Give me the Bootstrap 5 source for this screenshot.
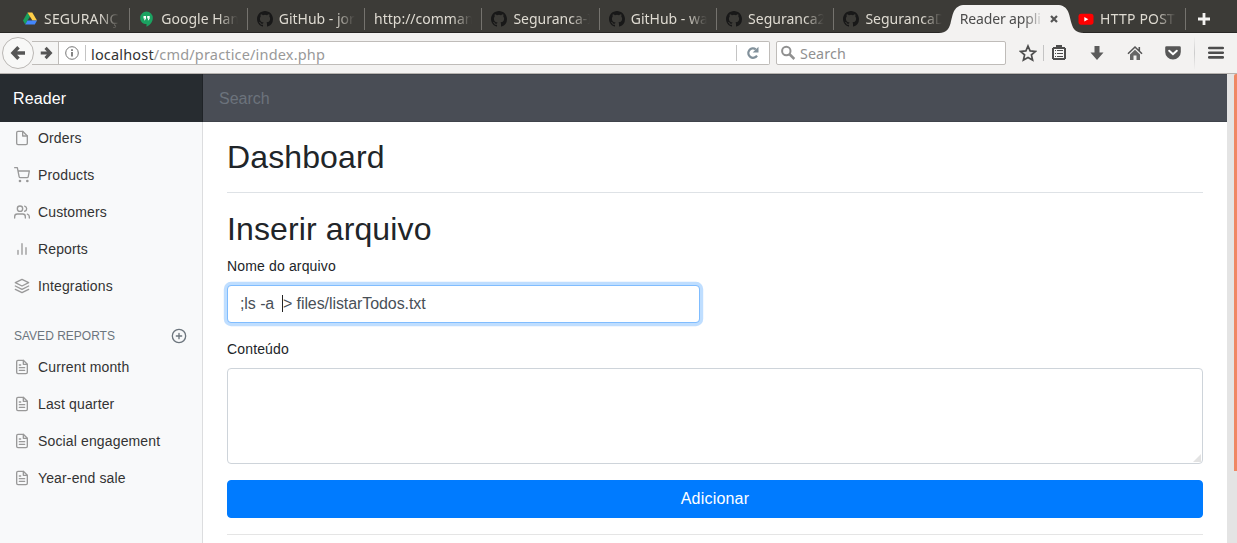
<!DOCTYPE html>
<html lang="pt-BR">
<head>
<meta charset="utf-8">
<meta name="viewport" content="width=device-width, initial-scale=1">
<title>Reader application</title>
<link href="https://cdn.jsdelivr.net/npm/bootstrap@5.3.0/dist/css/bootstrap.min.css" rel="stylesheet">
<style>
  body { font-family: "Liberation Sans", Arial, sans-serif; font-size: 14px; color: #212529; height: 543px; overflow: hidden; background: #fff; }
  .chrome { font-family: "Noto Sans", "Open Sans", sans-serif; }
  /* tab strip */
  .tabstrip { height: 33px; background: #3c3b37; border-bottom: 1px solid #282725; padding-left: 12px; }
  .tab { width: 117.35px; height: 32px; padding: 6px 9px 0 10px; position: relative; color: #dfdbd2; font-size: 14px; flex: none; }
  .tab.sep::after { content: ""; position: absolute; right: -1px; top: 8px; width: 1px; height: 22px; background: #75736e; }
  .tab svg { flex: none; }
  .tab-icon { margin-right: 6px; }
  .tab-text { flex: 1; min-width: 0; white-space: nowrap; overflow: hidden; line-height: 26px; -webkit-mask-image: linear-gradient(90deg, #000 calc(100% - 20px), transparent); mask-image: linear-gradient(90deg, #000 calc(100% - 20px), transparent); }
  .tab-text.caps { letter-spacing: .2px; }
  .tab.current { color: #4c4c4c; z-index: 2; padding-left: 9px; }
  .tab.current .tab-text { letter-spacing: -.15px; }
  .tab.current > * { position: relative; }
  .tab.current .tab-shape { position: absolute; left: -12px; top: 4px; }
  .tab-close { margin: 0 1px 1px 6px; }
  .new-tab { margin: 12px 0 0 12px; }
  /* toolbar */
  .toolbar { height: 41px; background: #f3f2f1; border-bottom: 1px solid #b7b3b0; color: #4d4d4d; }
  .back { width: 32px; height: 32px; border: 1px solid #bab7b4; border-radius: 50%; background: #f8f8f7; margin-left: 2px; z-index: 1; }
  .forward { width: 27px; height: 24px; margin-left: -2px; padding-right: 5px; border: solid #bfbcb9; border-width: 1px 1px 1px 0; background: #f5f5f4; }
  .urlbar { width: 711px; height: 24px; background: #fff; border: solid #bfbcb9; border-width: 1px 1px 1px 0; border-radius: 0 2px 2px 0; font-size: 14.5px; color: #999; }
  .url-text { margin-left: 5px; padding-top: 2px; letter-spacing: .17px; line-height: 20px; }
  .urlbar b { font-weight: 400; color: #333; }
  .vline { width: 1px; height: 16px; background: #c4c4c4; flex: none; }
  .searchbox { width: 230px; height: 24px; background: #fff; border: 1px solid #bfbcb9; border-radius: 2px; margin-left: 6px; font-size: 14.3px; color: #909090; }
  .searchbox span { padding-top: 2px; line-height: 20px; letter-spacing: .1px; }
  .tools svg { display: block; flex: none; margin-left: 22px; }
  /* page */
  .viewport { height: 469px; }
  .topbar { height: 48px; font-size: 16px; box-shadow: inset 0 1px #30343a55, inset 0 -1px #30343a55; background: #494d55; }
  .brand { width: 203px; background: #272c30; color: #fff; padding-left: 13px; line-height: 50px; height: 48px; border-right: 1px solid #1f2327; letter-spacing: .12px; }
  .top-search { padding-left: 16px; line-height: 50px; height: 48px; color: #6c737c; }
  .side { width: 203px; background: #f8f9fa; border-right: 1px solid #dcdddf; overflow: hidden; }
  .side .nav { margin-top: -2px; }
  .side .nav.second { margin-top: 0; padding-top: 1px; }
  .side .nav-link { height: 37px; padding: 0 14px; color: #333; font-size: 14px; font-weight: 500; letter-spacing: .14px; }
  .side .nav-link svg { margin: -2px 8px 0 0; color: #999; flex: none; }
  .side-heading { height: 23px; margin: 20px 15px 0 14px; padding-bottom: 1px; font-size: 12px; color: #6c757d; }
  .ftr { width: 16px; height: 16px; fill: none; stroke: currentColor; stroke-width: 2; stroke-linecap: round; stroke-linejoin: round; }
  .main-col { padding: 16px 24px 0; }
  .main-col h2 { font-size: 32px; font-weight: 500; line-height: 1.2; margin: 0 0 8px; letter-spacing: .12px; }
  .main-col .section-title { padding-top: 1px; margin-bottom: 7px; }
  .title-row { border-bottom: 1px solid #dee2e6; padding-bottom: 8px; margin-bottom: 16px; height: 55.4px; }
  .form-label { display: block; line-height: 21px; margin-bottom: 8px; letter-spacing: .15px; }
  .form-control { border-color: #ced4da; border-radius: 4px; color: #495057; }
  .file-name { width: 473px; height: 38px; font-size: 16px; letter-spacing: -.08px; border-color: #80bdff; box-shadow: 0 0 0 3.2px rgba(0,123,255,.25); }
  .caret { position: absolute; left: 55px; top: 10px; width: 1px; height: 17px; background: #222; }
  .content-area { height: 96px; resize: none; display: block; }
  .grip { position: absolute; right: 2px; bottom: 2px; }
  .add-btn { height: 38px; background: #007bff; border-color: #007bff; border-radius: 4px; font-size: 16px; padding: 5px; letter-spacing: .2px; }
  .rule { border-top: 1px solid #e5e5e5; margin-top: 16px; }
  .scroll-track { width: 10px; background: #e4e4e4; flex: none; }
  .scroll-thumb { width: 3px; height: 397px; background: #f08763; border-radius: 2px 0 0 0; }
</style>
</head>
<body>
<svg class="d-none">
  <symbol id="octo" viewBox="0 0 16 16"><path fill="#181818" fill-rule="evenodd" d="M8 0C3.58 0 0 3.58 0 8c0 3.54 2.29 6.53 5.47 7.59.4.07.55-.17.55-.38 0-.19-.01-.82-.01-1.49-2.01.37-2.53-.49-2.69-.94-.09-.23-.48-.94-.82-1.13-.28-.15-.68-.52-.01-.53.63-.01 1.08.58 1.23.82.72 1.21 1.87.87 2.33.66.07-.52.28-.87.51-1.07-1.78-.2-3.64-.89-3.64-3.95 0-.87.31-1.59.82-2.15-.08-.2-.36-1.02.08-2.12 0 0 .67-.21 2.2.82a7.6 7.6 0 0 1 4 0c1.53-1.04 2.2-.82 2.2-.82.44 1.1.16 1.92.08 2.12.51.56.82 1.27.82 2.15 0 3.07-1.87 3.75-3.65 3.95.29.25.54.73.54 1.48 0 1.07-.01 1.93-.01 2.2 0 .21.15.46.55.38A8.01 8.01 0 0 0 16 8c0-4.42-3.58-8-8-8z"/></symbol>
  <symbol id="doc" viewBox="0 0 24 24"><path d="M14 2H6a2 2 0 0 0-2 2v16a2 2 0 0 0 2 2h12a2 2 0 0 0 2-2V8z"/><path d="M14 2v6h6M16 13H8M16 17H8M10 9H8"/></symbol>
</svg>

<header class="chrome">
  <div class="tabstrip d-flex">
    <div class="tab sep d-flex align-items-center">
      <svg class="tab-icon" width="16" height="16" viewBox="0 0 16 16"><path fill="#18a05e" d="M5.5 1.5 1 9.4 3.2 13.5 8 5.5z"/><path fill="#ffcf48" d="M5.5 1.5h4.8L15 9.4h-4.6z"/><path fill="#4387fd" d="M5.5 9.4H15l-2.2 4.1H3.2z"/></svg>
      <span class="tab-text caps">SEGURANÇ</span></div>
    <div class="tab sep d-flex align-items-center">
      <svg class="tab-icon" width="16" height="16" viewBox="0 0 16 16"><path fill="#1ba261" d="M7.5.6A6.2 6.2 0 0 0 1.2 6.9c0 3.6 2.7 6.2 6.3 6.2v2.6c3.7-1.8 6.3-5 6.3-8.8A6.2 6.2 0 0 0 7.5.6z"/><path fill="#fff" d="M4.5 5h2.500v2.600L6 9.300H5l.7-1.700H4.500zM8.200 5h2.500v2.600L9.700 9.300h-1l.7-1.700H8.200z"/></svg>
      <span class="tab-text">Google Han</span></div>
    <div class="tab sep d-flex align-items-center"><svg class="tab-icon" width="16" height="16"><use href="#octo"/></svg><span class="tab-text">GitHub - jor</span></div>
    <div class="tab sep d-flex align-items-center"><span class="tab-text">http://comman</span></div>
    <div class="tab sep d-flex align-items-center"><svg class="tab-icon" width="16" height="16"><use href="#octo"/></svg><span class="tab-text">Seguranca-I</span></div>
    <div class="tab sep d-flex align-items-center"><svg class="tab-icon" width="16" height="16"><use href="#octo"/></svg><span class="tab-text">GitHub - wa</span></div>
    <div class="tab sep d-flex align-items-center"><svg class="tab-icon" width="16" height="16"><use href="#octo"/></svg><span class="tab-text">Seguranca2</span></div>
    <div class="tab d-flex align-items-center"><svg class="tab-icon" width="16" height="16"><use href="#octo"/></svg><span class="tab-text">SegurancaD</span></div>
    <div class="tab current d-flex align-items-center">
      <svg class="tab-shape" width="145" height="29" viewBox="0 0 145 29"><path fill="#f3f2f1" d="M0 29c7-.5 9.500-3 11.500-9.500C14 9 15 1 26 1h92c11 0 12 8 14.500 18.500C134.500 26 137 28.500 145 29z"/></svg>
      <span class="tab-text">Reader appli</span>
      <svg class="tab-close" width="8" height="8" viewBox="0 0 8 8"><path d="M1 1l6 6M7 1 1 7" stroke="#555" stroke-width="2.200"/></svg></div>
    <div class="tab sep d-flex align-items-center"><svg class="tab-icon" width="16" height="16" viewBox="0 0 16 16"><rect x=".5" y="2.700" width="15" height="11" rx="2.600" fill="#f00"/><path fill="#fff" d="M6.300 5.900v4.600l4-2.300z"/></svg><span class="tab-text caps">HTTP POST</span></div>
    <svg class="new-tab" width="14" height="14" viewBox="0 0 14 14"><path d="M7 1v12M1 7h12" stroke="#f4f3f1" stroke-width="2.800"/></svg>
  </div>
  <div class="toolbar d-flex align-items-center">
    <div class="back d-flex align-items-center justify-content-center position-relative"><svg width="16" height="16" viewBox="0 0 16 16"><path d="M8.500 2.300 3 8l5.500 5.700M3.500 8H15" fill="none" stroke="#555" stroke-width="3.500"/></svg></div>
    <div class="forward d-flex align-items-center justify-content-end"><svg width="14" height="14" viewBox="0 0 16 16"><path d="M7.500 2.200 13 8l-5.500 5.800M2 8h11" fill="none" stroke="#555" stroke-width="3.500"/></svg></div>
    <div class="urlbar d-flex align-items-center">
      <svg width="14" height="14" viewBox="0 0 14 14" style="margin:0 6px"><circle cx="7" cy="7" r="6.300" fill="none" stroke="#777"/><path d="M7 6v4.500M7 3.200v1.700" stroke="#777" stroke-width="1.800"/></svg>
      <span class="vline"></span><span class="url-text"><b>localhost</b>/cmd/practice/index.php</span>
      <span class="vline ms-auto"></span>
      <svg width="14" height="14" viewBox="0 0 14 14" style="margin:0 9px"><path d="M11 9.600A4.700 4.700 0 1 1 9.800 3.300" fill="none" stroke="#82919b" stroke-width="2.200"/><path fill="#82919b" d="M12.500.8v5.800H6.700z"/></svg>
    </div>
    <div class="searchbox d-flex align-items-center"><svg width="16" height="16" viewBox="0 0 16 16" style="margin:0 4px 0 3px"><circle cx="6.300" cy="6" r="4.200" fill="none" stroke="#909090" stroke-width="2"/><path d="m9.300 9 5 5" stroke="#909090" stroke-width="2.500"/></svg><span>Search</span></div>
    <div class="tools d-flex align-items-center flex-fill">
      <svg width="18" height="18" viewBox="0 0 18 18" style="margin-left:13px"><path d="m9 2 2.100 4.900 5.300.5-4 3.500 1.200 5.200L9 13.400l-4.600 2.700 1.200-5.200-4-3.500 5.300-.5z" fill="none" stroke="#4d4d4d" stroke-width="1.700"/></svg>
      <span class="vline" style="margin-left:6px"></span>
      <svg width="16" height="16" viewBox="0 0 16 16" style="margin-left:7px" shape-rendering="crispEdges"><path d="M5 0h6v2h3v1h1v11h-1v1H2v-1H1V3h1V2h3z" fill="#4d4d4d"/><path d="M3 4h10v9H3z" fill="#f6f6f5"/><path d="M4 5.500h1M4 8.500h1M4 11.500h1M6 5.500h6M6 8.500h6M6 11.500h6" stroke="#4d4d4d"/></svg>
      <svg width="16" height="16" viewBox="0 0 16 16"><path d="M5.500 1h5v6.500h4L8 15 1.500 7.500h4z" fill="#5b5b5b"/></svg>
      <svg width="16" height="16" viewBox="0 0 16 16"><path d="M1 8.800 8 2l7 6.800M12.300 2v4" fill="none" stroke="#555" stroke-width="1.600"/><path d="M3 9.600l5-4.800 5 4.800V15H9.500v-4.500h-3V15H3z" fill="#666"/></svg>
      <svg width="16" height="16" viewBox="0 0 16 16"><path d="M1.500 1.200h13a1.300 1.300 0 0 1 1.300 1.300V7A7.800 7.600 0 0 1 .2 7V2.500a1.300 1.300 0 0 1 1.300-1.300z" fill="#575757"/><path d="m4.200 5.700 3.800 3.500 3.800-3.500" fill="none" stroke="#fff" stroke-width="2" stroke-linecap="round"/></svg>
      <span class="vline" style="margin-left:13px;height:34px;background:linear-gradient(#0000,#ccc,#0000)"></span>
      <svg width="16" height="14" viewBox="0 0 16 14" style="margin-left:13px"><path d="M1.200 2h13.600M1.200 6.700h13.600M1.200 11.400h13.600" stroke="#4d4d4d" stroke-width="2.600" stroke-linecap="round"/></svg>
    </div>
  </div>
</header>

<div class="viewport d-flex">
  <div class="d-flex flex-column flex-fill">
    <nav class="topbar d-flex"><div class="brand">Reader</div><div class="top-search">Search</div></nav>
    <div class="d-flex flex-fill">
      <aside class="side">
        <ul class="nav flex-column">
          <li><a class="nav-link d-flex align-items-center"><svg class="ftr" viewBox="0 0 24 24"><path d="M13 2H6a2 2 0 0 0-2 2v16a2 2 0 0 0 2 2h12a2 2 0 0 0 2-2V9z"/><path d="M13 2v7h7"/></svg>Orders</a></li>
          <li><a class="nav-link d-flex align-items-center"><svg class="ftr" viewBox="0 0 24 24"><circle cx="9" cy="21" r="1"/><circle cx="20" cy="21" r="1"/><path d="M1 1h4l2.680 13.390a2 2 0 0 0 2 1.610h9.720a2 2 0 0 0 2-1.610L23 6H6"/></svg>Products</a></li>
          <li><a class="nav-link d-flex align-items-center"><svg class="ftr" viewBox="0 0 24 24"><path d="M17 21v-2a4 4 0 0 0-4-4H5a4 4 0 0 0-4 4v2"/><circle cx="9" cy="7" r="4"/><path d="M23 21v-2a4 4 0 0 0-3-3.870M16 3.130a4 4 0 0 1 0 7.750"/></svg>Customers</a></li>
          <li><a class="nav-link d-flex align-items-center"><svg class="ftr" viewBox="0 0 24 24"><path d="M18 20V10M12 20V4M6 20v-6"/></svg>Reports</a></li>
          <li><a class="nav-link d-flex align-items-center"><svg class="ftr" viewBox="0 0 24 24"><path d="M12 2 2 7l10 5 10-5zM2 17l10 5 10-5M2 12l10 5 10-5"/></svg>Integrations</a></li>
        </ul>
        <div class="side-heading d-flex align-items-center justify-content-between"><span>SAVED REPORTS</span><svg class="ftr" viewBox="0 0 24 24"><circle cx="12" cy="12" r="10"/><path d="M12 8v8M8 12h8"/></svg></div>
        <ul class="nav second flex-column">
          <li><a class="nav-link d-flex align-items-center"><svg class="ftr"><use href="#doc"/></svg>Current month</a></li>
          <li><a class="nav-link d-flex align-items-center"><svg class="ftr"><use href="#doc"/></svg>Last quarter</a></li>
          <li><a class="nav-link d-flex align-items-center"><svg class="ftr"><use href="#doc"/></svg>Social engagement</a></li>
          <li><a class="nav-link d-flex align-items-center"><svg class="ftr"><use href="#doc"/></svg>Year-end sale</a></li>
        </ul>
      </aside>
      <main class="main-col flex-fill">
        <div class="title-row"><h2>Dashboard</h2></div>
        <h2 class="section-title">Inserir arquivo</h2>
        <label class="form-label" for="fn">Nome do arquivo</label>
        <div class="position-relative mb-3"><input id="fn" class="form-control file-name" value=";ls -a  &gt; files/listarTodos.txt"><span class="caret"></span></div>
        <label class="form-label" for="ct">Conteúdo</label>
        <div class="position-relative mb-3"><textarea id="ct" class="form-control content-area"></textarea>
          <svg class="grip" width="8" height="8" viewBox="0 0 8 8"><path d="M8 0v8H0z" fill="#e3e3e3"/></svg></div>
        <button class="btn btn-primary w-100 d-block add-btn">Adicionar</button>
        <div class="rule"></div>
      </main>
    </div>
  </div>
  <div class="scroll-track d-flex justify-content-end"><div class="scroll-thumb"></div></div>
</div>
<script src="https://cdn.jsdelivr.net/npm/bootstrap@5.3.0/dist/js/bootstrap.bundle.min.js"></script>
</body>
</html>
